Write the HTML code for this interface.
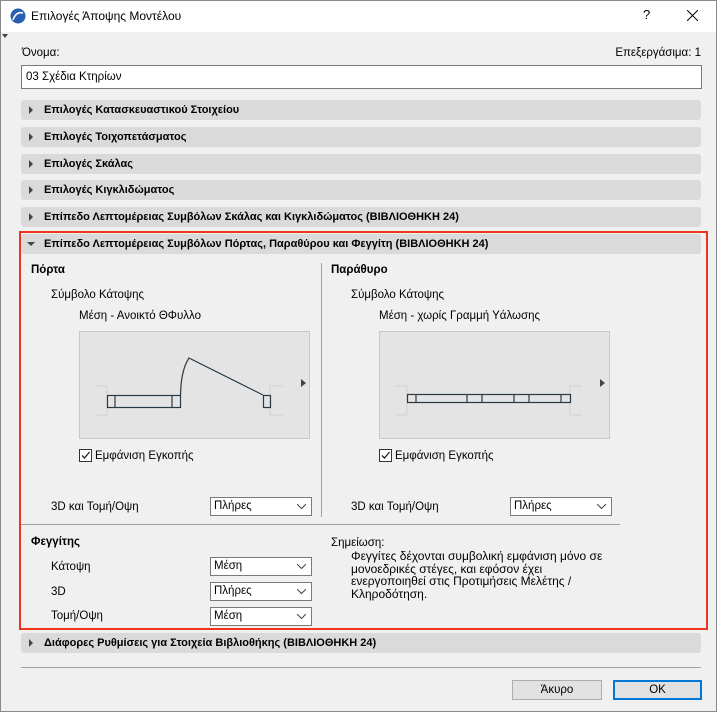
<!DOCTYPE html>
<html><head><meta charset="utf-8"><style>
*{box-sizing:border-box;margin:0;padding:0}
body{width:717px;height:712px;background:#f0f0f0;font-family:"Liberation Sans",sans-serif;font-size:11.5px;color:#000;position:relative;overflow:hidden}
.frame{position:absolute;left:0;top:0;width:717px;height:712px;border:1px solid #8a8a8a}
.t{position:absolute;white-space:nowrap;line-height:14px}
.title{position:absolute;left:1px;top:1px;width:715px;height:31px;background:#fff}
.bar{position:absolute;left:21px;width:680px;height:20px;background:#dadada;border-radius:3px}
.bar span{position:absolute;left:23px;top:4px;font-weight:bold;font-size:11px;white-space:nowrap;line-height:13px}
.bar i{position:absolute;left:8px;top:6px;width:0;height:0;border-left:4px solid #444;border-top:4px solid transparent;border-bottom:4px solid transparent}
.sel{position:absolute;width:102px;height:19px;background:#fff;border:1px solid #7a7a7a}
.sel span{position:absolute;left:3px;top:2px}
.sel svg{position:absolute;right:5px;top:6px}
.box{position:absolute;background:#e4e4e4;border:1px solid #c8c8c8}
.btn{position:absolute;height:20px;background:#e1e1e1;border:1px solid #adadad;text-align:center;line-height:18px}
</style></head><body>
<div class="frame"></div>
<div class="title"></div>
<svg style="position:absolute;left:10px;top:8px" width="16" height="16"><circle cx="8" cy="8" r="7.5" fill="#2a5fb0"/><path d="M3 12 Q6 3 13 5" stroke="#fff" stroke-width="1.6" fill="none"/></svg>
<div class="t" style="left:31px;top:9px;font-size:12px">Επιλογές Άποψης Μοντέλου</div>
<div class="t" style="left:643px;top:8px;font-size:13px">?</div>
<svg style="position:absolute;left:687px;top:10px" width="11" height="11"><path d="M0 0L11 11M11 0L0 11" stroke="#000" stroke-width="1"/></svg>
<div style="position:absolute;left:2px;top:34px;border-top:4px solid #444;border-left:3px solid transparent;border-right:3px solid transparent"></div>

<div class="t" style="left:22px;top:46px">Όνομα:</div>
<div class="t" style="right:16px;top:46px">Επεξεργάσιμα: 1</div>
<div style="position:absolute;left:21px;top:65px;width:681px;height:24px;background:#fff;border:1px solid #7a7a7a"></div>
<div class="t" style="left:26px;top:70px">03 Σχέδια Κτηρίων</div>

<div class="bar" style="top:100px"><i></i><span>Επιλογές Κατασκευαστικού Στοιχείου</span></div>
<div class="bar" style="top:127px"><i></i><span>Επιλογές Τοιχοπετάσματος</span></div>
<div class="bar" style="top:154px"><i></i><span>Επιλογές Σκάλας</span></div>
<div class="bar" style="top:180px"><i></i><span>Επιλογές Κιγκλιδώματος</span></div>
<div class="bar" style="top:207px"><i></i><span>Επίπεδο Λεπτομέρειας Συμβόλων Σκάλας και Κιγκλιδώματος (ΒΙΒΛΙΟΘΗΚΗ 24)</span></div>
<div class="bar" style="top:234px"><i style="left:6px;top:8px;border-top:4px solid #444;border-left:4px solid transparent;border-right:4px solid transparent;border-bottom:0"></i><span>Επίπεδο Λεπτομέρειας Συμβόλων Πόρτας, Παραθύρου και Φεγγίτη (ΒΙΒΛΙΟΘΗΚΗ 24)</span></div>
<div style="position:absolute;left:19px;top:231px;width:689px;height:399px;border:2px solid #f0321e"></div>

<div class="t" style="left:31px;top:263px;font-weight:bold">Πόρτα</div>
<div class="t" style="left:51px;top:288px">Σύμβολο Κάτοψης</div>
<div class="t" style="left:79px;top:309px">Μέση - Ανοικτό ΘΦυλλο</div>
<div class="box" style="left:79px;top:331px;width:231px;height:108px"></div>
<svg style="position:absolute;left:0;top:0" width="717" height="712">
<g stroke="#d0d0d0" fill="none"><path d="M95 386H107V415H95M283 386H270V415H283"/></g>
<g stroke="#2a3a44" fill="none" stroke-width="1.2"><rect x="107.5" y="395.5" width="73" height="12"/><path d="M115 395V408M172 395V408"/><path d="M180.5 395 Q181 370 189 358 L263 395"/><rect x="263.5" y="395.5" width="7" height="12"/></g>
<path d="M301 379L306 383L301 387Z" fill="#444"/>
<path d="M321.5 263V517M21 524.5H620M21 667.5H701" stroke="#a0a0a0"/>
</svg>
<div style="position:absolute;left:79px;top:449px;width:13px;height:13px;border:1px solid #333;background:#fff"></div>
<svg style="position:absolute;left:80px;top:450px" width="11" height="11"><path d="M2 5.5L4.5 8L9.5 2" stroke="#222" stroke-width="1.3" fill="none"/></svg>
<div class="t" style="left:95px;top:449px">Εμφάνιση Εγκοπής</div>
<div class="t" style="left:51px;top:500px">3D και Τομή/Οψη</div>
<div class="sel" style="left:210px;top:497px"><span>Πλήρες</span><svg width="9" height="6"><path d="M0 0L4.5 4.5L9 0" stroke="#444" fill="none"/></svg></div>

<div class="t" style="left:331px;top:263px;font-weight:bold">Παράθυρο</div>
<div class="t" style="left:351px;top:288px">Σύμβολο Κάτοψης</div>
<div class="t" style="left:379px;top:309px">Μέση - χωρίς Γραμμή Υάλωσης</div>
<div class="box" style="left:379px;top:331px;width:231px;height:108px"></div>
<svg style="position:absolute;left:0;top:0" width="717" height="712">
<g stroke="#d0d0d0" fill="none"><path d="M395 386H407V415H395M582 386H570V415H582"/></g>
<g stroke="#2a3a44" fill="none" stroke-width="1.2"><rect x="407.5" y="394.5" width="163" height="8"/><path d="M416 394V403M467 394V403M482 394V403M514 394V403M529 394V403M561 394V403"/></g>
<path d="M600 379L605 383L600 387Z" fill="#444"/></svg>
<div style="position:absolute;left:379px;top:449px;width:13px;height:13px;border:1px solid #333;background:#fff"></div>
<svg style="position:absolute;left:380px;top:450px" width="11" height="11"><path d="M2 5.5L4.5 8L9.5 2" stroke="#222" stroke-width="1.3" fill="none"/></svg>
<div class="t" style="left:395px;top:449px">Εμφάνιση Εγκοπής</div>
<div class="t" style="left:351px;top:500px">3D και Τομή/Οψη</div>
<div class="sel" style="left:510px;top:497px"><span>Πλήρες</span><svg width="9" height="6"><path d="M0 0L4.5 4.5L9 0" stroke="#444" fill="none"/></svg></div>

<div class="t" style="left:31px;top:535px;font-weight:bold">Φεγγίτης</div>
<div class="t" style="left:51px;top:560px">Κάτοψη</div>
<div class="t" style="left:51px;top:585px">3D</div>
<div class="t" style="left:51px;top:609px">Τομή/Οψη</div>
<div class="sel" style="left:210px;top:557px"><span>Μέση</span><svg width="9" height="6"><path d="M0 0L4.5 4.5L9 0" stroke="#444" fill="none"/></svg></div>
<div class="sel" style="left:210px;top:582px"><span>Πλήρες</span><svg width="9" height="6"><path d="M0 0L4.5 4.5L9 0" stroke="#444" fill="none"/></svg></div>
<div class="sel" style="left:210px;top:607px"><span>Μέση</span><svg width="9" height="6"><path d="M0 0L4.5 4.5L9 0" stroke="#444" fill="none"/></svg></div>
<div class="t" style="left:331px;top:536px">Σημείωση:</div>
<div class="t" style="left:351px;top:550px;line-height:12.6px;font-size:12px">Φεγγίτες δέχονται συμβολική εμφάνιση μόνο σε<br>μονοεδρικές στέγες, και εφόσον έχει<br>ενεργοποιηθεί στις Προτιμήσεις Μελέτης /<br>Κληροδότηση.</div>

<div class="bar" style="top:633px"><i></i><span>Διάφορες Ρυθμίσεις για Στοιχεία Βιβλιοθήκης (ΒΙΒΛΙΟΘΗΚΗ 24)</span></div>
<div class="btn" style="left:512px;top:680px;width:90px">Άκυρο</div>
<div class="btn" style="left:613px;top:680px;width:89px;border:2px solid #0078d7;line-height:16px">OK</div>
</body></html>
